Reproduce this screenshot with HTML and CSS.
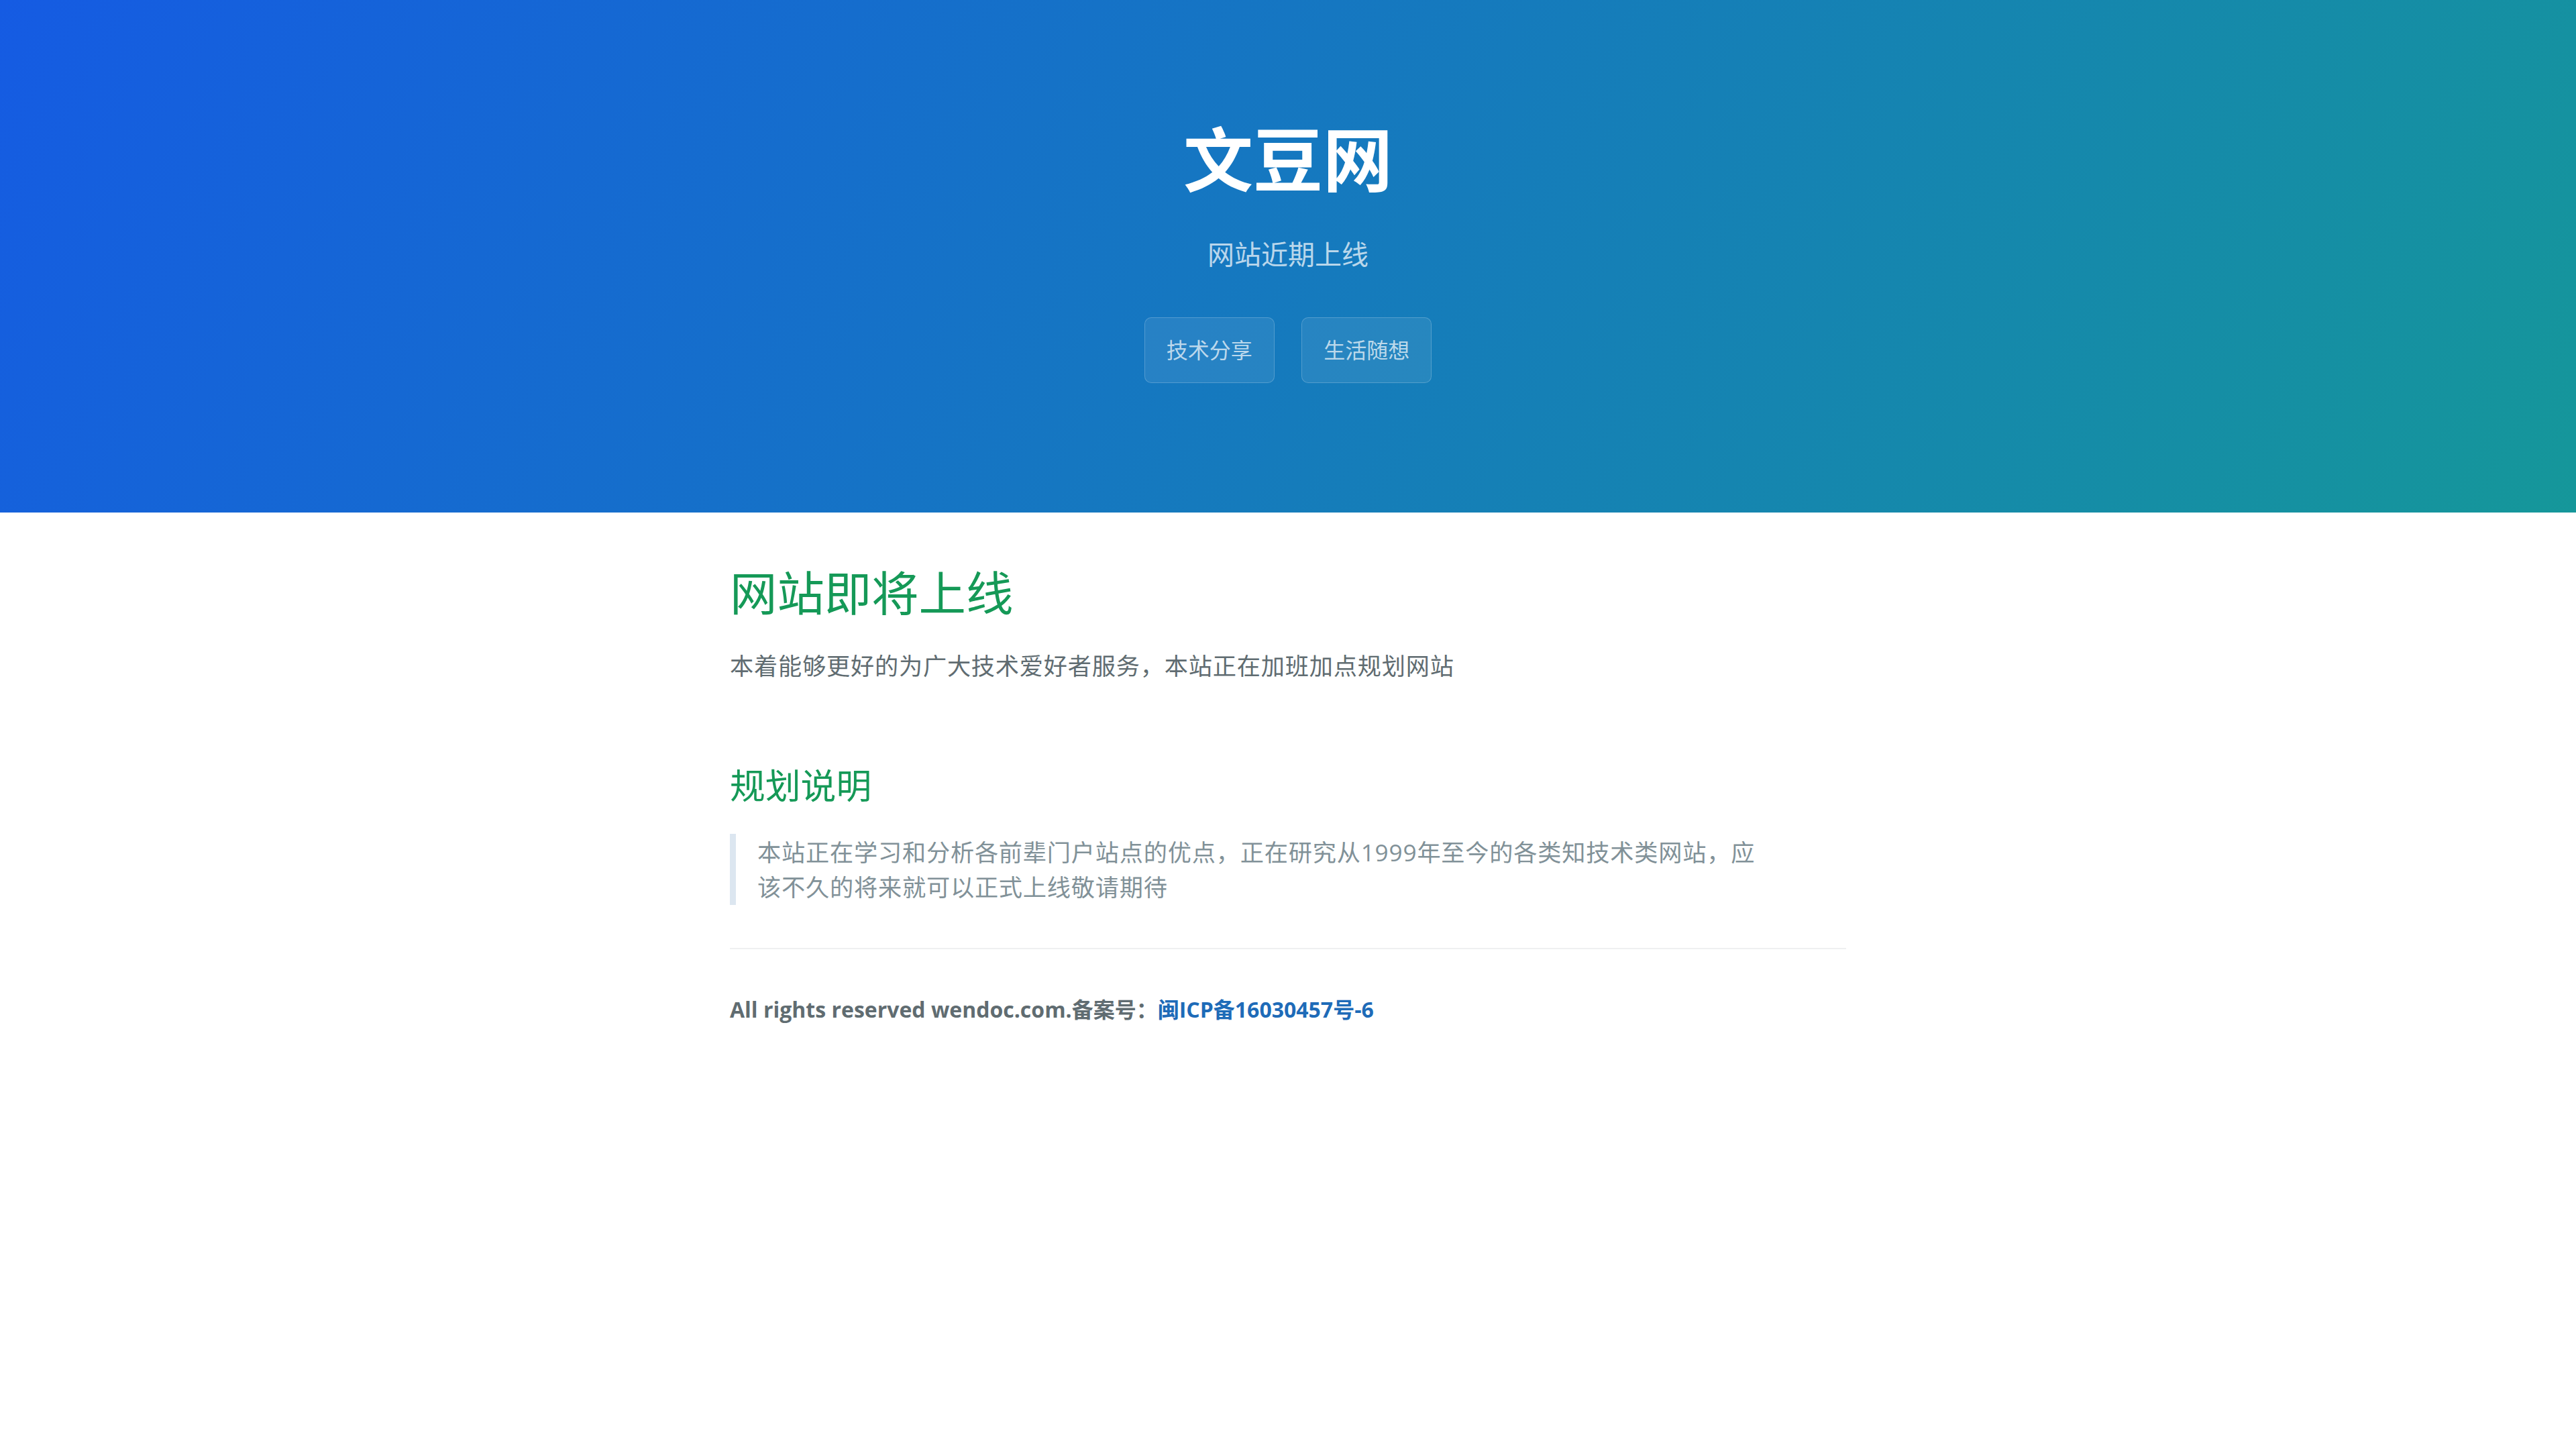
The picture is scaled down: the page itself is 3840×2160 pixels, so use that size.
FILE: index.html
```html
<!DOCTYPE html>
<html lang="zh-CN">
<head>
<meta charset="utf-8">
<title>文豆网</title>
<link rel="stylesheet" href="styles.css">
</head>
<body>
<section class="page-header">
  <h1 class="project-name">文豆网</h1>
  <h2 class="project-tagline">网站近期上线</h2>
  <a href="#" class="btn">技术分享</a>
  <a href="#" class="btn">生活随想</a>
</section>
<section class="main-content">
  <h1 class="main-title">网站即将上线</h1>
  <p class="intro">本着能够更好的为广大技术爱好者服务<span class="punct">，</span>本站正在加班加点规划网站</p>
  <h2 class="section-title">规划说明</h2>
  <blockquote class="quote">
    <p class="quote-text">本站正在学习和分析各前辈门户站点的优点<span class="punct">，</span>正在研究从1999年至今的各类知技术类网站<span class="punct">，</span>应<br>该不久的将来就可以正式上线敬请期待</p>
  </blockquote>
  <footer class="site-footer">
    <span class="site-footer-owner">All rights reserved wendoc.com.备案号<span class="punct">：</span><a href="#" class="footer-link">闽ICP备16030457号-6</a></span>
  </footer>
</section>
</body>
</html>
```

FILE: styles.css
```css
html, body {
  margin: 0;
  padding: 0;
}
body {
  font-family: "Open Sans", "Noto Sans CJK SC", "Liberation Sans", sans-serif;
  font-size: 32px;
  line-height: 1.5;
  color: #606c71;
  background: #ffffff;
}
a {
  color: #1e6bb8;
  text-decoration: none;
}
.punct {
  font-family: "Noto Sans CJK TC", "Noto Sans CJK SC", sans-serif;
}
.page-header {
  color: #ffffff;
  text-align: center;
  background-color: #1578c0;
  background-image: linear-gradient(120deg, #155be3, #15979a);
  padding: 160px 192px 161px;
}
.project-name {
  font-size: 104px;
  font-weight: bold;
  margin: 0 0 3px 0;
  line-height: 1.5;
}
.project-tagline {
  font-size: 40px;
  font-weight: normal;
  opacity: 0.7;
  margin: 33px 0 64px 0;
  line-height: 1.5;
}
.btn {
  display: inline-block;
  margin-bottom: 32px;
  padding: 24px 32px;
  color: rgba(255, 255, 255, 0.7);
  background-color: rgba(255, 255, 255, 0.08);
  border: 1px solid rgba(255, 255, 255, 0.2);
  border-radius: 10px;
  font-size: 32px;
  line-height: 48px;
}
.btn + .btn {
  margin-left: 32px;
}
.main-content {
  max-width: 2048px;
  box-sizing: border-box;
  padding: 68px 192px 64px;
  margin: 0 auto;
  font-size: 35.2px;
  word-wrap: break-word;
}
.main-title {
  font-size: 70.4px;
  font-weight: normal;
  color: #159957;
  margin: 0 0 27px 0;
  line-height: 1.5;
}
.intro {
  margin: 0 0 113px 0;
  letter-spacing: 0.8px;
}
.section-title {
  font-size: 52.8px;
  font-weight: normal;
  color: #159957;
  margin: 0 0 32px 0;
  line-height: 1.5;
}
.quote {
  margin: 0;
  padding: 0 32px;
  color: #819198;
  border-left: 9.6px solid #dce6f0;
}
.quote-text {
  margin: 0;
  letter-spacing: 0.8px;
}
.site-footer {
  margin-top: 64px;
  padding-top: 64px;
  border-top: 2px solid #eff0f1;
  font-size: 32px;
}
.site-footer-owner {
  display: block;
  font-weight: bold;
}
.footer-link {
  color: #1e6bb8;
}
```
